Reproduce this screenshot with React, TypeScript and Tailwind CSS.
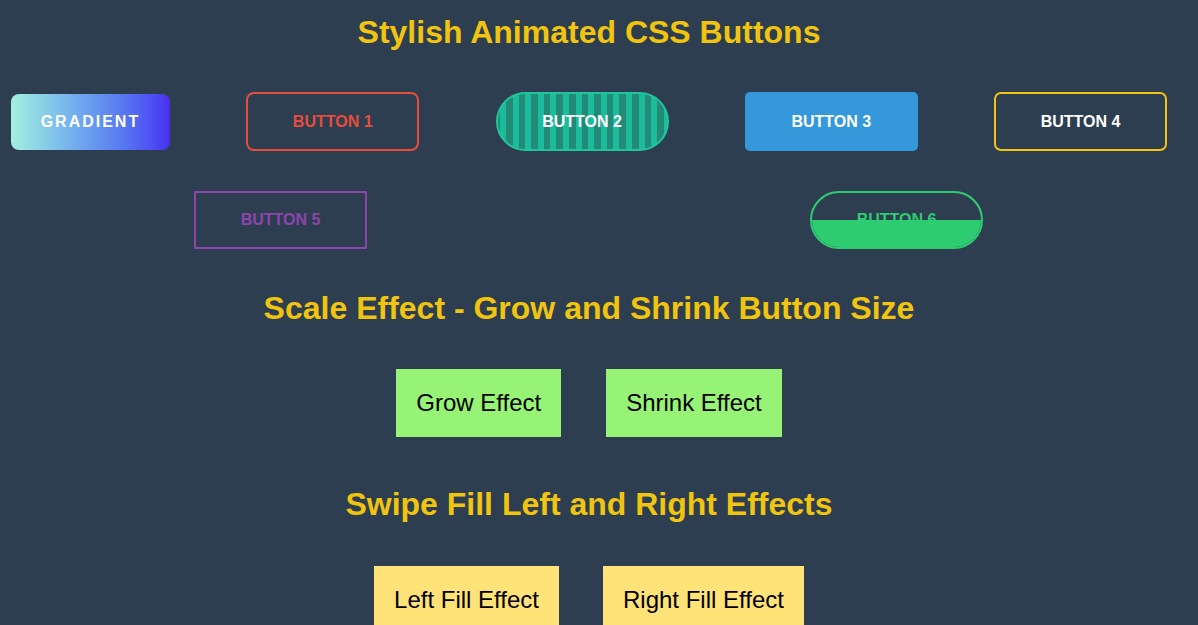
const font = "font-['Liberation_Sans',Arial,sans-serif]";

function Heading({ children, className = "" }: { children: string; className?: string }) {
  return (
    <h1 className={`text-center text-[32px] leading-[37px] font-bold text-[#f1c40f] ${className}`}>
      {children}
    </h1>
  );
}

const label = "flex items-center justify-center text-[16px] font-bold";

export default function App() {
  return (
    <div className={`min-h-[625px] w-full bg-[#2c3e50] ${font}`}>
      <div className="w-[1178px] pt-[14px]">
        <Heading>Stylish Animated CSS Buttons</Heading>

        <div className="mt-[41px] flex h-[59px] items-center justify-center gap-[76.3px]">
          <button className={`${label} h-[56px] w-[159px] rounded-lg bg-gradient-to-r from-[#a3f0de] to-[#4a2cf1] tracking-[2px] text-white`}>
            GRADIENT
          </button>
          <button className={`${label} h-[59px] w-[173px] rounded-lg border-2 border-[#e74c3c] text-[#e74c3c]`}>
            BUTTON 1
          </button>
          <button className={`${label} h-[59px] w-[173px] rounded-full border-2 border-[#22c49c] bg-[repeating-linear-gradient(90deg,#228a76_0px,#228a76_2px,#1abc9c_2px,#1abc9c_8px,#228a76_8px,#228a76_12.6px)] text-white`}>
            BUTTON 2
          </button>
          <button className={`${label} h-[59px] w-[173px] rounded-[5px] bg-[#3498db] text-white`}>
            BUTTON 3
          </button>
          <button className={`${label} h-[59px] w-[173px] rounded-[7px] border-2 border-[#f1c40f] text-white`}>
            BUTTON 4
          </button>
        </div>

        <div className="mt-[40px] flex h-[58px] items-center justify-center gap-[443px] pr-[1px]">
          <button className={`${label} h-[58px] w-[173px] border-2 border-[#8e44ad] text-[#8e44ad]`}>
            BUTTON 5
          </button>
          <button className={`${label} relative h-[58px] w-[173px] overflow-hidden rounded-full border-2 border-[#2ecc71] text-[#2ecc71]`}>
            BUTTON 6
            <span className="absolute inset-x-0 bottom-0 h-1/2 bg-[#2ecc71]" />
          </button>
        </div>

        <Heading className="mt-[41px]">Scale Effect - Grow and Shrink Button Size</Heading>

        <div className="mt-[42px] flex justify-center gap-[45px]">
          <button className="bg-[#96f376] px-5 py-5 text-[24px] leading-[28px] text-black">Grow Effect</button>
          <button className="bg-[#96f376] px-5 py-5 text-[24px] leading-[28px] text-black">Shrink Effect</button>
        </div>

        <Heading className="mt-[49px]">Swipe Fill Left and Right Effects</Heading>

        <div className="mt-[43px] flex justify-center gap-[44px]">
          <button className="bg-[#ffe278] px-5 py-5 text-[24px] leading-[28px] text-black">Left Fill Effect</button>
          <button className="bg-[#ffe278] px-5 py-5 text-[24px] leading-[28px] text-black">Right Fill Effect</button>
        </div>
      </div>
    </div>
  );
}
